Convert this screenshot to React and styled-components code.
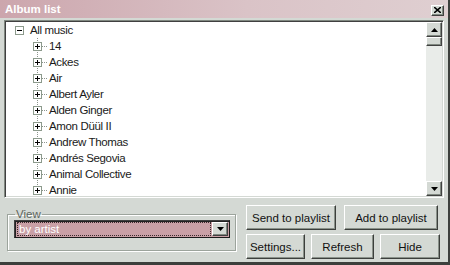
import React from "react";
import styled, { createGlobalStyle } from "styled-components";

const Global = createGlobalStyle`
  html, body { margin: 0; padding: 0; background: #d4d9d4; }
  body { font-family: "Liberation Sans", Arial, sans-serif; font-size: 11px; color: #000; }
`;

const Window = styled.div`
  box-sizing: border-box;
  width: 450px;
  height: 265px;
  background: #d4d9d4;
  border-right: 2px solid #3c3f3c;
  border-bottom: 3px solid #3c3f3c;
  display: flex;
  flex-direction: column;
  overflow: hidden;
`;

const TitleBar = styled.div`
  height: 18px;
  margin-bottom: 2px;
  padding: 0 4px 0 5px;
  display: flex;
  align-items: center;
  justify-content: space-between;
  background: linear-gradient(to right, #cca6ad, #dac3c7 55%, #dfcfd1);
`;

const Title = styled.span`
  color: #fff;
  font-weight: bold;
  font-size: 11.5px;
`;

const Bevel = styled.div`
  box-sizing: border-box;
  background: #d4d9d4;
  border: 1px solid;
  border-color: #ffffff #404040 #404040 #ffffff;
  box-shadow: inset -1px -1px 0 #808880;
  display: flex;
  align-items: center;
  justify-content: center;
`;

const CloseButton = styled(Bevel)`
  width: 13px;
  height: 11px;
  margin-top: 2px;
`;

const TreePanel = styled.div`
  box-sizing: border-box;
  margin: 0 4px 0 4px;
  height: 178px;
  border: 1px solid;
  border-color: #808880 #ffffff #ffffff #808880;
  box-shadow: inset 1px 1px 0 #404040, inset -1px -1px 0 #d4d9d4;
  background: #fff;
  padding: 1px;
  display: flex;
`;

const TreeList = styled.div`
  flex: 1;
  overflow: hidden;
`;

const Row = styled.div`
  height: 16px;
  display: flex;
  align-items: center;
  padding-left: ${(p) => p.$indent}px;
  white-space: nowrap;
  background: ${(p) =>
    p.$line
      ? "repeating-linear-gradient(to bottom, #8c948c 0 1px, transparent 1px 2px) 31px 0 / 1px 100% no-repeat"
      : "none"};
`;

const NodeBox = styled.svg`
  flex: none;
  display: block;
`;

const Dots = styled.span`
  width: 5px;
  height: 1px;
  margin: 0 2px 0 0;
  background: repeating-linear-gradient(to right, #8c948c 0 1px, transparent 1px 2px);
  flex: none;
`;

const Label = styled.span`
  margin-left: ${(p) => p.$gap || 0}px;
  line-height: 16px;
  font-size: 11.5px;
  letter-spacing: -0.35px;
  color: #1a1a1a;
`;

const Scrollbar = styled.div`
  width: 16px;
  background: #e9ece9;
  display: flex;
  flex-direction: column;
`;

const ScrollButton = styled(Bevel)`
  width: 16px;
  height: 15px;
  flex: none;
`;

const Thumb = styled(Bevel)`
  width: 16px;
  height: 9px;
  flex: none;
`;

const Spacer = styled.div`
  flex: 1;
`;

const Bottom = styled.div`
  display: flex;
  padding: 7px 6px 0 7px;
  gap: 10px;
`;

const Group = styled.fieldset`
  box-sizing: border-box;
  margin: 3px 0 0 0;
  width: 231px;
  height: 43px;
  padding: 0 5px 0 6px;
  border: 1px solid #9ca49c;
  box-shadow: 1px 1px 0 #fff, inset 1px 1px 0 #fff;
`;

const Legend = styled.legend`
  padding: 0 1px;
  margin-left: 1px;
  color: #5c645c;
  font-size: 11.5px;
`;

const Select = styled.div`
  box-sizing: border-box;
  height: 18px;
  display: flex;
  border: 1px solid;
  border-color: #404040 #1a1a1a #1a1a1a #404040;
  box-shadow: inset 1px 1px 0 #222;
  background: #c9a0a6;
  padding: 1px 1px 1px 2px;
`;

const SelectText = styled.div`
  flex: 1;
  color: #fff;
  border: 1px dotted #3a2a2c;
  line-height: 12px;
  font-size: 11.5px;
  padding-left: 1px;
  margin-right: 1px;
`;

const DropButton = styled(Bevel)`
  width: 16px;
  height: 14px;
`;

const Buttons = styled.div`
  flex: 1;
  display: flex;
  flex-direction: column;
  gap: 4px;
  padding-right: 2px;
`;

const ButtonRow = styled.div`
  display: flex;
  gap: ${(p) => p.$gap}px;
`;

const Button = styled.button`
  box-sizing: border-box;
  width: ${(p) => p.$w}px;
  height: 25px;
  padding: 0;
  font-family: "Liberation Sans", Arial, sans-serif;
  font-size: 11.5px;
  color: #111;
  background: #d4d9d4;
  border: 1px solid;
  border-color: #ffffff #3c3f3c #3c3f3c #ffffff;
  box-shadow: inset -1px -1px 0 #8a928a;
`;

const Arrow = ({ up }) => (
  <svg width="7" height="4" viewBox="0 0 7 4">
    <path d={up ? "M3.5 0 L7 4 L0 4 Z" : "M0 0 L7 0 L3.5 4 Z"} fill="#000" />
  </svg>
);

const Expander = ({ open }) => (
  <NodeBox width="9" height="9" viewBox="0 0 9 9">
    <rect x="0.5" y="0.5" width="8" height="8" fill="#fff" stroke="#8c9a8c" />
    <line x1="2" y1="4.5" x2="7" y2="4.5" stroke="#000" />
    {!open && <line x1="4.5" y1="2" x2="4.5" y2="7" stroke="#000" />}
  </NodeBox>
);

const artists = [
  "14",
  "Ackes",
  "Air",
  "Albert Ayler",
  "Alden Ginger",
  "Amon Düül II",
  "Andrew Thomas",
  "Andrés Segovia",
  "Animal Collective",
  "Annie",
];

export default function App() {
  return (
    <>
      <Global />
      <Window>
        <TitleBar>
          <Title>Album list</Title>
          <CloseButton>
            <svg width="7" height="6" viewBox="0 0 7 6">
              <path d="M0 0 L7 6 M7 0 L0 6" stroke="#000" strokeWidth="1.6" />
            </svg>
          </CloseButton>
        </TitleBar>
        <TreePanel>
          <TreeList>
            <Row $indent={9}>
              <Expander open />
              <Label $gap={6}>All music</Label>
            </Row>
            {artists.map((a) => (
              <Row key={a} $indent={27} $line>
                <Expander />
                <Dots />
                <Label>{a}</Label>
              </Row>
            ))}
          </TreeList>
          <Scrollbar>
            <ScrollButton>
              <Arrow up />
            </ScrollButton>
            <Thumb />
            <Spacer />
            <ScrollButton>
              <Arrow />
            </ScrollButton>
          </Scrollbar>
        </TreePanel>
        <Bottom>
          <Group>
            <Legend>View</Legend>
            <Select>
              <SelectText>by artist</SelectText>
              <DropButton>
                <Arrow />
              </DropButton>
            </Select>
          </Group>
          <Buttons>
            <ButtonRow $gap={8}>
              <Button $w={90}>Send to playlist</Button>
              <Button $w={94}>Add to playlist</Button>
            </ButtonRow>
            <ButtonRow $gap={6}>
              <Button $w={59}>Settings...</Button>
              <Button $w={63}>Refresh</Button>
              <Button $w={60}>Hide</Button>
            </ButtonRow>
          </Buttons>
        </Bottom>
      </Window>
    </>
  );
}
